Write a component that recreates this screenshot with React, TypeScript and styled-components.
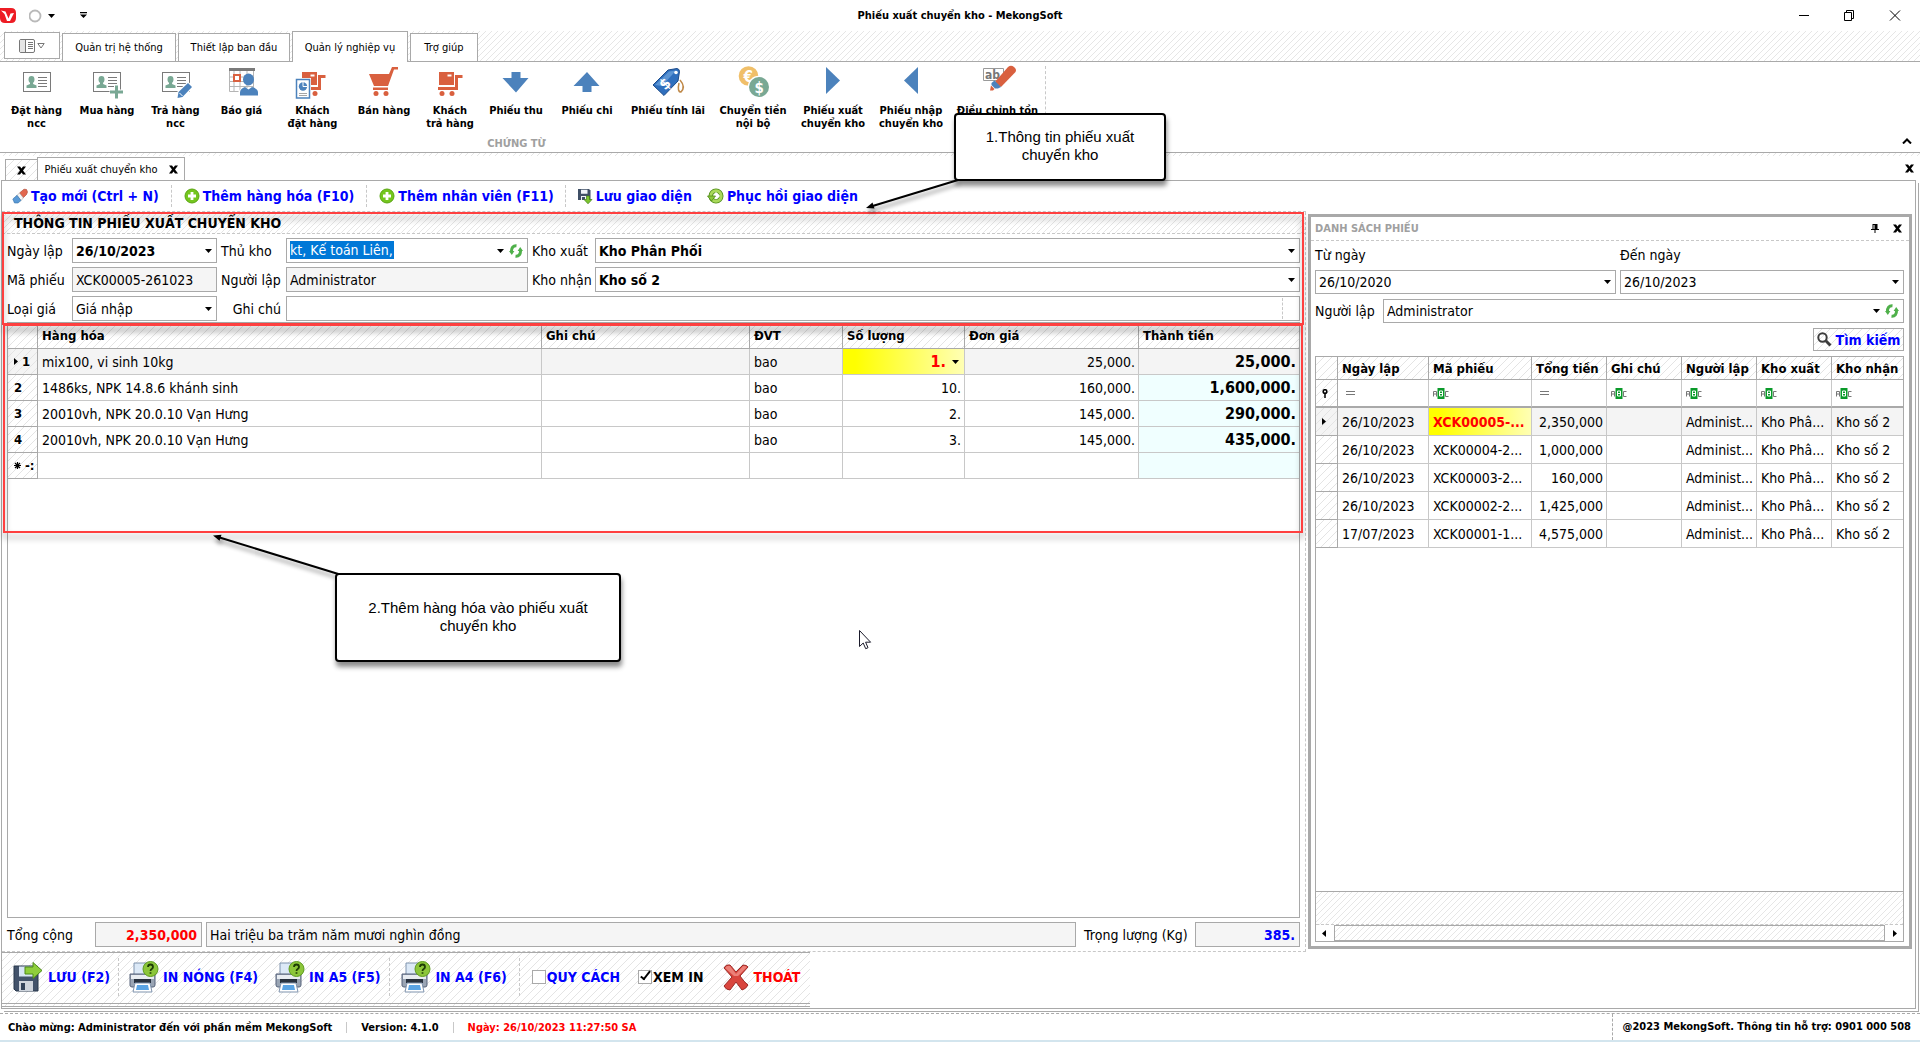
import React from 'react';
import styled, { createGlobalStyle, css } from 'styled-components';

const LINE = '#a9a9a9';
const SOFT = '#c8c8c8';
const UI = `'DejaVu Sans Condensed', 'DejaVu Sans', 'Noto Sans', sans-serif`;
const hatch = css`
  background-image: linear-gradient(-45deg, transparent 44%, #e6e6e6 46% 54%, transparent 56%);
  background-size: 6px 6px;
`;
const wideHatch = css`
  background-image: linear-gradient(-45deg, transparent 45%, #e4e4e4 47% 53%, transparent 55%);
  background-size: 8px 8px;
`;

const Global = createGlobalStyle`
  *, *::before, *::after { box-sizing: border-box; }
  body { margin: 0; background: #fff; color: #000; font-family: ${UI}; font-size: 14px; }
  button, input, select { font: inherit; color: inherit; margin: 0; padding: 0; border: 0; background: none; border-radius: 0; }
  input, select { outline: none; min-width: 0; }
  svg { display: block; flex: none; }
`;

const Shell = styled.div`
  position: relative;
  display: flex;
  flex-direction: column;
  min-height: 100vh;
  overflow: hidden;
`;

/* ---------- window title ---------- */
const TitleBar = styled.header`
  display: grid;
  grid-template-columns: 1fr auto 1fr;
  align-items: center;
  height: 31px;
`;
const QuickAccess = styled.div`
  display: flex;
  align-items: center;
  gap: 12px;
`;
const Title = styled.h1`
  margin: 0;
  font-size: 11px;
  font-weight: 700;
`;
const WindowButtons = styled.div`
  display: flex;
  justify-content: flex-end;
  gap: 26px;
  padding-right: 16px;
`;
const PlainButton = styled.button`
  display: flex;
  align-items: center;
  justify-content: center;
`;

/* ---------- ribbon ---------- */
const TabStrip = styled.nav`
  ${hatch}
  display: flex;
  align-items: flex-end;
  gap: 2px;
  height: 31px;
  padding-left: 4px;
  border-bottom: 1px solid ${LINE};
`;
const MenuButton = styled.button`
  display: flex;
  align-items: center;
  justify-content: center;
  gap: 2px;
  width: 56px;
  height: 27px;
  margin-bottom: 2px;
  border: 1px solid ${LINE};
  background: #fff;
`;
const RibbonTab = styled.button<{ $width: number; $active?: boolean }>`
  width: ${p => p.$width}px;
  height: ${p => (p.$active ? 31 : 28)}px;
  margin-bottom: ${p => (p.$active ? -1 : 0)}px;
  border: 1px solid ${LINE};
  border-bottom: 0;
  background: #fff;
  font-size: 11px;
`;
const Ribbon = styled.section`
  display: flex;
  justify-content: space-between;
  height: 91px;
  padding: 0 8px 0 2px;
  border-bottom: 1px solid ${LINE};
`;
const RibbonGroup = styled.div`
  display: flex;
  flex-direction: column;
  justify-content: space-between;
  margin: 4px 0 2px;
  border-right: 1px dashed ${SOFT};
`;
const RibbonItems = styled.div`
  display: flex;
`;
const RibbonButton = styled.button<{ $width: number }>`
  display: flex;
  flex-direction: column;
  align-items: center;
  gap: 4px;
  width: ${p => p.$width}px;
  font-size: 11px;
  font-weight: 700;
  line-height: 13px;
  white-space: pre-line;
`;
const RibbonCaption = styled.div`
  padding-right: 14px;
  color: #a0a0a0;
  font-size: 11px;
  font-weight: 700;
  line-height: 12px;
  text-align: center;
`;
const Collapse = styled(PlainButton)`
  align-self: flex-end;
  margin-bottom: 8px;
`;

/* ---------- document tabs ---------- */
const Seam = styled.div`
  ${hatch}
  height: 3px;
`;
const DocTabs = styled.nav`
  display: flex;
  align-items: flex-end;
  height: 24px;
  padding: 0 6px 0 5px;
`;
const DocTab = styled.div<{ $active?: boolean }>`
  ${p => !p.$active && wideHatch}
  display: flex;
  align-items: center;
  justify-content: center;
  gap: 11px;
  width: ${p => (p.$active ? 148 : 32)}px;
  height: ${p => (p.$active ? 24 : 21)}px;
  margin-bottom: ${p => (p.$active ? -1 : 0)}px;
  border: 1px solid ${LINE};
  border-width: 1px ${p => (p.$active ? 1 : 0)}px 0 1px;
  background-color: #fff;
  font-size: 11px;
`;
const DocClose = styled(PlainButton)`
  margin-left: auto;
  align-self: center;
`;

/* ---------- work frame ---------- */
const Frame = styled.main`
  display: flex;
  flex: 1;
  flex-direction: column;
  margin: 0 4px 4px 1px;
  border: 1px solid ${LINE};
  box-shadow: 2px 2px 0 #fff, 3px 3px 0 ${LINE};
`;
const Tools = styled.div`
  display: flex;
  align-items: center;
  height: 31px;
  padding-left: 10px;
  margin-right: 609px;
  border-bottom: 1px dashed ${SOFT};
`;
const Tool = styled.button`
  display: flex;
  align-items: center;
  gap: 3px;
  color: #0000ff;
  font-weight: 700;
  white-space: nowrap;
`;
const Divider = styled.span<{ $h: number; $gap?: number }>`
  height: ${p => p.$h}px;
  margin: 0 ${p => p.$gap || 12}px;
  border-left: 1px dashed ${SOFT};
`;
const ToolGap = styled.span`
  width: 15px;
`;
const Work = styled.div`
  display: grid;
  flex: 1;
  grid-template-columns: 1fr 606px;
  padding-right: 3px;
`;
const Left = styled.div`
  display: flex;
  flex-direction: column;
  min-width: 0;
  border-right: 1px dashed ${SOFT};
  border-bottom: 1px dashed ${SOFT};
`;
const Marked = styled.section<{ $grow?: boolean }>`
  position: relative;
  display: flex;
  flex-direction: column;
  flex: ${p => (p.$grow ? 1 : 'none')};
`;
const RedFrame = styled.div<{ $lower?: boolean }>`
  position: absolute;
  z-index: 2;
  inset: ${p => (p.$lower ? '2px 2px auto 1px' : '0 1px -3px 0')};
  height: ${p => (p.$lower ? '209px' : 'auto')};
  border: 2px solid #ff4040;
  filter: drop-shadow(0 5px 3px rgba(0, 0, 0, 0.35));
  pointer-events: none;
`;
const SectionTitle = styled.h2`
  ${hatch}
  height: 22px;
  margin: 0;
  padding-left: 12px;
  border-bottom: 1px dashed ${SOFT};
  font-size: 14px;
  line-height: 22px;
`;
const Form = styled.form`
  display: grid;
  grid-template-columns: 65px 145px 69px 242px 67px 1fr;
  gap: 4px 0;
  align-items: center;
  padding: 4px 5px 1px;
`;
const Label = styled.label<{ $right?: boolean }>`
  padding: 0 ${p => (p.$right ? 5 : 0)}px 0 ${p => (p.$right ? 0 : 4)}px;
  text-align: ${p => (p.$right ? 'right' : 'left')};
  white-space: nowrap;
`;
const FirstLabel = styled(Label)`
  padding-left: 0;
`;
const Box = styled.span<{ $h?: number; $span?: number; $off?: boolean; $bold?: boolean; $color?: string; $end?: boolean }>`
  display: flex;
  align-items: center;
  gap: 5px;
  min-width: 0;
  height: ${p => p.$h || 25}px;
  padding: 0 4px 0 3px;
  grid-column: span ${p => p.$span || 1};
  border: 1px solid ${LINE};
  background: ${p => (p.$off ? '#f5f5f5' : '#fff')};
  color: ${p => p.$color || '#000'};
  font-weight: ${p => (p.$bold ? 700 : 400)};
  input, select { flex: 1; width: 0; text-align: ${p => (p.$end ? 'right' : 'left')}; }
  select { appearance: none; }
`;
const PickedInput = styled.input`
  && { flex: none; width: 104px; height: 18px; margin-bottom: 2px; background: #0078d7; color: #fff; }
`;
const Push = styled.span`
  display: flex;
  align-items: center;
  gap: 5px;
  margin-left: auto;
`;
const Notch = styled.span`
  height: 21px;
  margin-right: 12px;
  border-left: 1px dashed ${SOFT};
`;

/* ---------- data grids ---------- */
const GridBox = styled.div<{ $left?: boolean }>`
  display: flex;
  flex: 1;
  flex-direction: column;
  margin: ${p => (p.$left ? '0 5px' : '0')};
  border: 1px solid ${LINE};
`;
const Table = styled.table<{ $row: number; $head: number }>`
  width: 100%;
  border-spacing: 0;
  table-layout: fixed;
  th, td {
    height: ${p => p.$row}px;
    padding: 0 0 0 4px;
    border: 0 solid ${SOFT};
    border-width: 0 1px 1px 0;
    font-weight: 400;
    text-align: left;
    white-space: nowrap;
    overflow: hidden;
  }
  th { ${wideHatch} border-color: ${LINE}; }
  thead th { height: ${p => p.$head}px; font-size: 13px; font-weight: 700; }
  th:last-child, td:last-child { border-right: 0; }
`;
const Row = styled.tr<{ $current?: boolean }>`
  background: ${p => (p.$current ? '#f4f4f4' : '#fff')};
`;
const Cell = styled.td<{ $num?: boolean; $total?: boolean; $tint?: boolean; $hot?: boolean }>`
  && { ${p => (p.$num ? 'padding-right: 3px; text-align: right;' : '')} }
  ${p => p.$total && '&& { font-size: 16px; font-weight: 700; }'}
  ${p => p.$tint && 'background: #f0ffff;'}
  ${p => p.$hot && '&& { background: linear-gradient(90deg, #ffff00 10%, #ffffb4); color: #ff0000; font-weight: 700; }'}
`;
const RowHead = styled.th`
  && { padding: 0 0 0 6px; font-weight: 700; font-size: 13px; }
`;
const MarkLine = styled.span`
  display: flex;
  align-items: center;
  gap: 4px;
`;
const Editor = styled.span`
  display: flex;
  align-items: center;
  gap: 6px;
  padding-right: 5px;
  font-size: 16px;
  input { flex: 1; width: 0; text-align: right; }
`;

const Totals = styled.div`
  display: flex;
  align-items: center;
  gap: 4px;
  padding: 4px 5px;
`;
const TotalLabel = styled.label<{ $w: number }>`
  width: ${p => p.$w}px;
  padding-left: ${p => (p.$w > 100 ? 4 : 0)}px;
  white-space: nowrap;
`;
const Sized = styled.span<{ $w?: number }>`
  flex: ${p => (p.$w ? 'none' : 1)};
  width: ${p => (p.$w ? p.$w + 'px' : 'auto')};
`;

/* ---------- voucher list panel ---------- */
const Panel = styled.aside`
  display: flex;
  flex-direction: column;
  margin: 2px 0 3px 2px;
  border: 3px solid ${LINE};
`;
const PanelHead = styled.header`
  display: flex;
  align-items: center;
  gap: 14px;
  height: 24px;
  padding: 0 7px 0 4px;
  border-bottom: 1px dashed ${SOFT};
  h2 { flex: 1; margin: 0; color: #a0a0a0; font-size: 11px; }
`;
const PanelBody = styled.div`
  display: flex;
  flex: 1;
  flex-direction: column;
  gap: 5px;
  padding: 0 5px 4px 4px;
`;
const Dates = styled.div`
  display: grid;
  grid-template-columns: 301px 1fr;
  column-gap: 4px;
  label { line-height: 29px; }
`;
const Author = styled.div`
  display: grid;
  grid-template-columns: 68px 1fr;
  align-items: center;
`;
const Search = styled.button`
  ${wideHatch}
  display: flex;
  align-items: center;
  align-self: flex-end;
  justify-content: center;
  gap: 4px;
  width: 91px;
  height: 23px;
  border: 1px solid ${LINE};
  color: #0000ff;
  font-weight: 700;
  white-space: nowrap;
`;
const GridFoot = styled.div`
  ${hatch}
  height: 34px;
  margin-top: auto;
  border-top: 1px solid ${LINE};
  border-bottom: 1px dashed ${SOFT};
`;
const Scroll = styled.div`
  display: flex;
  align-items: center;
  justify-content: space-between;
  gap: 8px;
  height: 16px;
  padding: 0 6px;
`;
const Thumb = styled.span`
  ${hatch}
  flex: 1;
  height: 16px;
  border: 1px solid ${LINE};
`;
const FilterRow = styled.tr`
  th, td { border-bottom: 2px solid ${LINE}; }
`;

/* ---------- bottom actions ---------- */
const Actions = styled.div`
  ${wideHatch}
  display: flex;
  align-items: center;
  align-self: flex-start;
  height: 55px;
  margin-bottom: 1px;
  padding: 0 10px 2px;
  border-top: 1px solid ${LINE};
  border-bottom: 4px double ${LINE};
`;
const Action = styled.button<{ $color?: string; $gap?: number }>`
  display: flex;
  align-items: center;
  gap: 4px;
  margin-right: ${p => p.$gap || 0}px;
  color: ${p => p.$color || '#0000ff'};
  font-weight: 700;
  white-space: nowrap;
`;
const Check = styled.label<{ $color: string }>`
  display: flex;
  align-items: center;
  gap: 1px;
  margin-right: 18px;
  color: ${p => p.$color};
  font-weight: 700;
  input {
    appearance: none;
    width: 14px;
    height: 14px;
    border: 1px solid ${LINE};
    background: #fff;
  }
  input:checked::after {
    content: '';
    display: block;
    width: 5px;
    height: 11px;
    margin: -2px 0 0 4px;
    border: solid #000;
    border-width: 0 2px 2px 0;
    transform: rotate(38deg);
  }
`;
const Status = styled.footer`
  display: flex;
  align-items: center;
  height: 29px;
  padding: 0 9px 0 8px;
  border-top: 1px dashed ${LINE};
  border-bottom: 2px solid #d3e5ee;
  font-size: 11px;
  font-weight: 700;
  white-space: nowrap;
`;
const StatusBar = styled.span`
  width: 1px;
  height: 11px;
  margin: 0 14px;
  background: ${SOFT};
`;
const Clock = styled.span`
  color: #ff0000;
`;
const Support = styled.span`
  margin-left: auto;
  padding-left: 10px;
  border-left: 1px dashed ${LINE};
  line-height: 26px;
`;

/* ---------- annotations floating over the window ---------- */
const Callout = styled.div<{ $x: number; $y: number; $w: number; $h: number }>`
  position: absolute;
  z-index: 4;
  left: ${p => p.$x}px;
  top: ${p => p.$y}px;
  display: flex;
  align-items: center;
  justify-content: center;
  width: ${p => p.$w}px;
  height: ${p => p.$h}px;
  padding: 0 26px 2px;
  border: 2px solid #000;
  border-radius: 4px;
  background: #fff;
  box-shadow: 1px 5px 5px rgba(0, 0, 0, 0.45);
  font-family: 'Liberation Sans', Arial, sans-serif;
  font-size: 15px;
  line-height: 18px;
  text-align: center;
`;
const Overlay = styled.svg<{ $x: number; $y: number }>`
  position: absolute;
  z-index: 3;
  left: ${p => p.$x}px;
  top: ${p => p.$y}px;
  overflow: visible;
  pointer-events: none;
`;
const Shaded = styled.g`
  filter: drop-shadow(1px 4px 2px rgba(0, 0, 0, 0.45));
`;

/* ---------- icons ---------- */
const Caret = () => (
  <svg width="7" height="4" viewBox="0 0 7 4"><path d="M0 0h7L3.500 4z" fill="#000" /></svg>
);
const Cross = () => (
  <svg width="9" height="9" viewBox="0 0 9 9"><path d="M0 .5h3l1.500 2 1.500-2h3L6 4.500l3 4H6l-1.500-2-1.500 2H0l3-4z" fill="#000" /></svg>
);
const Refresh = () => (
  <svg width="14" height="14" viewBox="0 0 14 14" fill="none" stroke="#4fb04a" strokeWidth="3">
    <path d="M7.500 1.800C4 1.500 2.300 4 2.500 7.500M6.500 12.200c3.500.3 5.200-2.200 5-5.700" />
    <path d="M0 7h5.400L2.800 11zM14 7H8.600l2.600-4z" fill="#4fb04a" stroke="none" />
  </svg>
);
const Plus = () => (
  <svg width="16" height="16" viewBox="0 0 16 16">
    <circle cx="8" cy="8" r="7" fill="#74c61e" stroke="#5aa512" />
    <path d="M8 4v8M4 8h8" stroke="#fff" strokeWidth="2.800" />
  </svg>
);
const Eraser = () => (
  <svg width="16" height="16" viewBox="0 0 16 16">
    <path d="M7.500 5L12 1.200l2.500.3 1 2.500-1 2.500-4 4z" fill="#e2674d" stroke="#a8412e" strokeWidth=".6" />
    <path d="M5 7.300L7.500 5l4 5-2.700 2.600z" fill="#f6f6f6" stroke="#999" strokeWidth=".5" />
    <path d="M.8 11L5 7.300l4 5.200-3 2.500H2.500z" fill="#5a9ad6" stroke="#336fa8" strokeWidth=".6" />
  </svg>
);
const SaveDown = () => (
  <svg width="16" height="16" viewBox="0 0 16 16">
    <path d="M1 1h11l1.500 1.500V12H1z" fill="#3f4f66" />
    <path d="M4 1.800h6.500v4H4zM4 8h7v4H4z" fill="#eef2f7" />
    <path d="M5 9h3v3H5z" fill="#3f4f66" />
    <path d="M9.500 8h3v3.500H15L11 15.800 7 11.500h2.500z" fill="#7cc52e" stroke="#3d7d12" strokeWidth=".7" />
  </svg>
);
const Restore = () => (
  <svg width="17" height="16" viewBox="0 0 17 16">
    <circle cx="9" cy="8" r="5.200" fill="none" stroke="#4e8a18" strokeWidth="4.600" />
    <circle cx="9" cy="8" r="5.200" fill="none" stroke="#a9d95a" strokeWidth="3" />
    <path d="M.5 8h8L4.500 13z" fill="#8cc83c" stroke="#4e8a18" strokeWidth=".8" />
    <path d="M8.500 4.500L12 8l-3.500 3" fill="none" stroke="#fff" strokeWidth="1.500" />
  </svg>
);
const Magnifier = () => (
  <svg width="15" height="15" viewBox="0 0 15 15" fill="none" stroke="#3c3c3c">
    <circle cx="5.500" cy="5.500" r="4.200" strokeWidth="2" />
    <path d="M8.800 8.800l4.700 4.700" strokeWidth="3" />
  </svg>
);
const AbcIcon = () => (
  <svg width="16" height="11" viewBox="0 0 16 11" fill="none">
    <path d="M.5 8.500v-5h3v5M.5 6h3" stroke="#777" />
    <path d="M4.500 0h7v11h-7z" fill="#0a9a2a" />
    <path d="M6.500 3h3v5h-3zM6.500 5.500h3" stroke="#fff" />
    <path d="M15.500 3.500h-3v5h3" stroke="#777" />
  </svg>
);
const EqIcon = () => (
  <svg width="14" height="5" viewBox="0 0 14 5"><path d="M4 .5h9M4 3.500h9" stroke="#777" /></svg>
);
const RightMark = () => (
  <svg width="4" height="7" viewBox="0 0 4 7"><path d="M0 0l4 3.500L0 7z" /></svg>
);
const LeftMark = () => (
  <svg width="4" height="7" viewBox="0 0 4 7"><path d="M4 0L0 3.500 4 7z" /></svg>
);
const Logo = () => (
  <svg width="17" height="17" viewBox="0 0 17 17">
    <path d="M0 1h11q5 0 5 5v5q0 5-5 5H5q-5 0-5-5z" fill="#ed1c24" />
    <path d="M1 3.500l4.500 1 3 7 2-5 3.500-.5-4 8H7L4.500 7z" fill="#fff" />
  </svg>
);
const MenuIcon = () => (
  <svg width="16" height="14" viewBox="0 0 16 14" fill="none" stroke="#777">
    <rect x=".5" y=".5" width="15" height="13" rx="1.500" />
    <path d="M6.500 1v12" />
    <path d="M9 3.500h5M9 5.500h5M9 7.500h5M9 9.500h5" />
    <path d="M1 1h5v12H1z" fill="#e6e6e6" stroke="none" />
  </svg>
);
const Card = () => (
  <g>
    <rect x="2.500" y="5.500" width="27" height="19" fill="#fff" stroke="#7a7a7a" />
    <path d="M17 10.500h9M17 13.500h9M17 16.500h9M17 19.500h9" stroke="#7a7a7a" />
    <path d="M10.500 9a3 3.400 0 0 1 3 3.400c0 1.500-.6 2.600-1.400 3.300v1.300l3.400 1.600V21h-10v-2.400L9 17v-1.300c-.9-.7-1.500-1.800-1.500-3.300a3 3.400 0 0 1 3-3.400z" fill="#79a894" />
  </g>
);
const Cart = ({ box }: { box?: boolean }) => (
  <g fill="#d9603f">
    {box ? (
      <>
        <path d="M5 5h15v13H5z" />
        <path d="M13.500 7.500h4v2h-4z" fill="#fff" />
        <path d="M22.500 23V9.500h6" fill="none" stroke="#d9603f" strokeWidth="3" />
        <path d="M4 20h20v3H4z" />
      </>
    ) : (
      <>
        <path d="M1 7h20l3-7h6v2.500h-4L20 19H6z" />
        <path d="M5 20.500h15V23H5z" />
      </>
    )}
    <circle cx="8" cy="26.500" r="2.500" />
    <circle cx="18" cy="26.500" r="2.500" />
  </g>
);
const blue = '#4c82bc';
const ribbonArt: Record<string, React.ReactNode> = {
  card: <Card />,
  cardPlus: <><Card /><path d="M25.500 17.500v14M18.500 25h14" stroke="#fff" strokeWidth="5" /><path d="M25.500 18.500v13M19 25h13" stroke="#79a894" strokeWidth="3" /></>,
  cardPen: <><Card /><path d="M16 32l1-7L28 14.500l6 5.500-11 11z" fill="#fff" /><path d="M17.500 31l1-6L28 16l4 4-9.500 10z" fill={blue} /><path d="M19.500 26l3 3" stroke="#fff" /></>,
  quote: <>
    <path d="M3.500 4v20.500h24V4M3.500 10h24M3.500 14.500h24M3.500 19.500h24M8 4v20M14 4v20M21 4v20" fill="none" stroke="#b5b5b5" />
    <path d="M3 1h26v3H3z" fill="#7a7a7a" />
    <path d="M8 8h6v6H8z" fill="#fff" stroke="#d9603f" strokeWidth="2" />
    <path d="M12 31v-4q0-5 6-6h9q5 1 6 6v4z" fill="#fff" />
    <ellipse cx="22.500" cy="12.500" rx="5.500" ry="6" fill={blue} />
    <path d="M14 28.500v-3q0-4 5-5.500l3.500 2.500L26 20q6 1.500 6 5.500v3z" fill={blue} />
  </>,
  order: <><Cart box /><path d="M-2 11h16v21H-2z" fill="#fff" /><path d="M-.5 12.500h13v18.500h-13z" fill="#fff" stroke={blue} strokeWidth="1.500" /><circle cx="6" cy="19.500" r="4.200" fill={blue} /><path d="M6 15v4.500h4.500" stroke="#fff" fill="none" /><path d="M2 26.500h8M2 28.500h8" stroke="#a5a5a5" /></>,
  cart: <Cart />,
  cartBox: <Cart box />,
  down: <path d="M11.500 5h9v6h8L16 25.500 2.500 11h9z" fill={blue} />,
  up: <path d="M11.500 25h9v-6h8L16 5 2.500 19h9z" fill={blue} />,
  tag: <>
    <path d="M28 13q6 7 1 12-4 0-2-9" fill="none" stroke="#c08a4a" strokeWidth="1.500" />
    <path d="M1 18L16 3l9-1.500q2.500.5 2.500 3L26 14 12 28.500z" fill="#2f6fbd" stroke="#1c4b8a" />
    <path d="M3 18L17 4.500l7-1L10 19z" fill="#5c95d4" />
    <text x="8" y="21" fill="#fff" fontSize="15" fontWeight="700" transform="rotate(-45 14 16)">$</text>
    <circle cx="24" cy="5.500" r="1.800" fill="#fff" />
  </>,
  coins: <>
    <circle cx="11.500" cy="9" r="9.800" fill="#f0bf69" />
    <text x="6.500" y="14.500" fill="#fff" fontSize="15" fontWeight="700">€</text>
    <circle cx="22" cy="20" r="11.200" fill="#fff" />
    <circle cx="22" cy="20" r="10" fill="#79a894" />
    <text x="17.500" y="25.500" fill="#fff" fontSize="15" fontWeight="700">$</text>
  </>,
  right: <path d="M9 0l14 13.500L9 27z" fill={blue} />,
  left: <path d="M23 0L9 13.500 23 27z" fill={blue} />,
  marker: <>
    <path d="M1.500 1.500h20v12h-20z" fill="#fff" stroke="#9a9a9a" />
    <text x="3" y="12" fill="#777" fontSize="12">ab</text>
    <path d="M12 16L26 0q3-2.500 6 0t1.500 5L19 20z" fill="#d9603f" />
    <path d="M12.500 13.500l6.500 6.500-3 1.500h-3l-3.500-3.500v-2z" fill={blue} />
    <path d="M9 18.500l3.500 3.500-1.500 1.500H8z" fill="#d9603f" />
  </>,
};
const RibbonIcon = ({ name }: { name: string }) => (
  <svg width="32" height="34" viewBox="0 -1 32 34" overflow="visible">{ribbonArt[name]}</svg>
);
const Floppy = () => (
  <svg width="32" height="32" viewBox="0 0 32 32">
    <path d="M2 5h22l2 2v23H4l-2-2z" fill="#43536b" stroke="#29384d" />
    <path d="M7 5.500h14v10H7z" fill="#d8e6f5" />
    <path d="M7 20h14v10H7z" fill="#cfd5dd" />
    <path d="M9 22h4v7H9z" fill="#33435a" />
    <path d="M13 6h8V1.500l9 8-9 8V13h-8z" fill="#8fce3c" stroke="#4c8a17" />
  </svg>
);
const Printer = () => (
  <svg width="32" height="32" viewBox="0 0 32 32">
    <path d="M7 2h14v13H7z" fill="#dce9f7" stroke="#7f93ad" />
    <path d="M3 13h25v11q0 2-2 2H5q-2 0-2-2z" fill="#9aa5b4" stroke="#56637a" />
    <path d="M4 14h23v4H4z" fill="#e9edf2" />
    <path d="M7 18h17v4H7z" fill="#28323f" />
    <path d="M8 22h15l2 9H6z" fill="#fff" stroke="#7f93ad" />
    <path d="M10 24h11l1 5H9z" fill="#5aa4e4" />
    <circle cx="23.500" cy="8" r="7.500" fill="#8cc63a" stroke="#5d9a1e" />
    <path d="M21 6q0-2.500 2.500-2.500T26 6q0 1-1.300 2-1.200.8-1.200 2M23.500 11.300v1.500" fill="none" stroke="#1e3d05" strokeWidth="1.800" />
  </svg>
);
const Exit = () => (
  <svg width="28" height="28" viewBox="0 0 28 28">
    <path d="M2 5q2-4 6-3l6 7 7-7q4 0 5 2l-8 9q4 6 8 9-2 4-6 5l-6-8-6 8q-4 0-6-4l8-9z" fill="#d9453d" stroke="#9c2a26" />
    <path d="M3 5q2-3 5-2l6 8 7-8q3 0 4 1l-9 9H12z" fill="#ec8078" />
  </svg>
);

const ribbonItems: [string, string, number][] = [
  ['card', 'Đặt hàng\nncc', 69], ['cardPlus', 'Mua hàng', 72], ['cardPen', 'Trả hàng\nncc', 65],
  ['quote', 'Báo giá', 67], ['order', 'Khách\nđặt hàng', 75], ['cart', 'Bán hàng', 68],
  ['cartBox', 'Khách\ntrả hàng', 64], ['down', 'Phiếu thu', 68], ['up', 'Phiếu chi', 74],
  ['tag', 'Phiếu tính lãi', 88], ['coins', 'Chuyển tiền\nnội bộ', 82],
  ['right', 'Phiếu xuất\nchuyển kho', 78], ['left', 'Phiếu nhập\nchuyển kho', 78], ['marker', 'Điều chỉnh tồn', 95],
];
const goods = [
  ['mix100, vi sinh 10kg', 'bao', '1.', '25,000.', '25,000.'],
  ['1486ks, NPK 14.8.6 khánh sinh', 'bao', '10.', '160,000.', '1,600,000.'],
  ['20010vh, NPK 20.0.10 Vạn Hưng', 'bao', '2.', '145,000.', '290,000.'],
  ['20010vh, NPK 20.0.10 Vạn Hưng', 'bao', '3.', '145,000.', '435,000.'],
];
const vouchers = [
  ['26/10/2023', 'XCK00005-...', '2,350,000'],
  ['26/10/2023', 'XCK00004-2...', '1,000,000'],
  ['26/10/2023', 'XCK00003-2...', '160,000'],
  ['26/10/2023', 'XCK00002-2...', '1,425,000'],
  ['17/07/2023', 'XCK00001-1...', '4,575,000'],
];

export default function App() {
  return (
    <Shell>
      <Global />
      <TitleBar>
        <QuickAccess>
          <Logo />
          <PlainButton aria-label="Giao diện">
            <svg width="26" height="14" viewBox="0 0 26 14">
              <circle cx="6" cy="7" r="5.500" fill="none" stroke="#b9b9b9" strokeWidth="1.800" />
              <path d="M19 5h7l-3.500 4z" />
            </svg>
          </PlainButton>
          <PlainButton aria-label="Tùy chỉnh">
            <svg width="32" height="7" viewBox="0 0 32 7"><path d="M13 0h7v1.200h-7zM13 2.500h7L16.500 6z" /></svg>
          </PlainButton>
        </QuickAccess>
        <Title>Phiếu xuất chuyển kho - MekongSoft</Title>
        <WindowButtons>
          <PlainButton aria-label="Thu nhỏ"><svg width="19" height="11" viewBox="0 0 19 11"><path d="M4 5.500h10" stroke="#000" /></svg></PlainButton>
          <PlainButton aria-label="Khôi phục"><svg width="19" height="11" viewBox="0 0 19 11" fill="none" stroke="#000"><path d="M4.500 2.500h7v8h-7zM6.500 2.500v-2h7v8h-2" /></svg></PlainButton>
          <PlainButton aria-label="Đóng"><svg width="19" height="11" viewBox="0 0 19 11"><path d="M5 .5l10 10M15 .5l-10 10" stroke="#000" /></svg></PlainButton>
        </WindowButtons>
      </TitleBar>

      <TabStrip>
        <MenuButton aria-label="Menu">
          <MenuIcon />
          <svg width="8" height="6" viewBox="0 0 8 6"><path d="M.8.500h6.400L4 5z" fill="none" stroke="#777" /></svg>
        </MenuButton>
        <RibbonTab $width={114}>Quản trị hệ thống</RibbonTab>
        <RibbonTab $width={112}>Thiết lập ban đầu</RibbonTab>
        <RibbonTab $width={116} $active>Quản lý nghiệp vụ</RibbonTab>
        <RibbonTab $width={68}>Trợ giúp</RibbonTab>
      </TabStrip>

      <Ribbon>
        <RibbonGroup>
          <RibbonItems>
            {ribbonItems.map(([icon, text, width]) => (
              <RibbonButton key={text} $width={width}><RibbonIcon name={icon} />{text}</RibbonButton>
            ))}
          </RibbonItems>
          <RibbonCaption>CHỨNG TỪ</RibbonCaption>
        </RibbonGroup>
        <Collapse aria-label="Thu gọn">
          <svg width="10" height="6" viewBox="0 0 10 6"><path d="M1 5.500L5 1.500l4 4" fill="none" stroke="#000" strokeWidth="2" /></svg>
        </Collapse>
      </Ribbon>
      <Seam />

      <DocTabs>
        <DocTab><PlainButton aria-label="Đóng"><Cross /></PlainButton></DocTab>
        <DocTab $active>Phiếu xuất chuyển kho<PlainButton aria-label="Đóng phiếu"><Cross /></PlainButton></DocTab>
        <DocClose aria-label="Đóng tất cả"><Cross /></DocClose>
      </DocTabs>

      <Frame>
        <Tools>
          <Tool><Eraser />Tạo mới (Ctrl + N)</Tool>
          <Divider $h={22} />
          <Tool><Plus />Thêm hàng hóa (F10)</Tool>
          <Divider $h={22} />
          <Tool><Plus />Thêm nhân viên (F11)</Tool>
          <Divider $h={22} $gap={11} />
          <Tool><SaveDown />Lưu giao diện</Tool>
          <ToolGap />
          <Tool><Restore />Phục hồi giao diện</Tool>
        </Tools>

        <Work>
          <Left>
            <Marked>
              <SectionTitle>THÔNG TIN PHIẾU XUẤT CHUYỂN KHO</SectionTitle>
              <Form>
                <FirstLabel htmlFor="date">Ngày lập</FirstLabel>
                <Box $bold><input id="date" defaultValue="26/10/2023" /><Caret /></Box>
                <Label htmlFor="keeper">Thủ kho</Label>
                <Box><PickedInput id="keeper" defaultValue="kt, Kế toán Liên," /><Push><Caret /><Refresh /></Push></Box>
                <Label htmlFor="from">Kho xuất</Label>
                <Box $bold><select id="from"><option>Kho Phân Phối</option></select><Caret /></Box>

                <FirstLabel htmlFor="code">Mã phiếu</FirstLabel>
                <Box $off><input id="code" readOnly defaultValue="XCK00005-261023" /></Box>
                <Label htmlFor="author">Người lập</Label>
                <Box $off><input id="author" readOnly defaultValue="Administrator" /></Box>
                <Label htmlFor="to">Kho nhận</Label>
                <Box $bold><select id="to"><option>Kho số 2</option></select><Caret /></Box>

                <FirstLabel htmlFor="price">Loại giá</FirstLabel>
                <Box><select id="price"><option>Giá nhập</option></select><Caret /></Box>
                <Label $right htmlFor="note">Ghi chú</Label>
                <Box $span={3}><input id="note" /><Notch /></Box>
              </Form>
              <RedFrame />
            </Marked>

            <Marked $grow>
              <GridBox $left>
                <Table $row={26} $head={26}>
                  <colgroup>
                    <col style={{ width: 30 }} /><col /><col style={{ width: 208 }} /><col style={{ width: 93 }} />
                    <col style={{ width: 122 }} /><col style={{ width: 174 }} /><col style={{ width: 160 }} />
                  </colgroup>
                  <thead>
                    <tr><th /><th>Hàng hóa</th><th>Ghi chú</th><th>ĐVT</th><th>Số lượng</th><th>Đơn giá</th><th>Thành tiền</th></tr>
                  </thead>
                  <tbody>
                    {goods.map(([name, unit, qty, price, total], i) => (
                      <Row key={i} $current={i === 0}>
                        <RowHead scope="row"><MarkLine>{i === 0 && <RightMark />}{i + 1}</MarkLine></RowHead>
                        <Cell>{name}</Cell>
                        <Cell />
                        <Cell>{unit}</Cell>
                        {i === 0
                          ? <Cell $hot><Editor><input aria-label="Số lượng" defaultValue={qty} /><Caret /></Editor></Cell>
                          : <Cell $num>{qty}</Cell>}
                        <Cell $num>{price}</Cell>
                        <Cell $num $total $tint={i > 0}>{total}</Cell>
                      </Row>
                    ))}
                    <Row>
                      <RowHead scope="row">
                        <MarkLine>
                          <svg width="7" height="7" viewBox="0 0 7 7"><path d="M3.500 0v7M0 3.500h7M1 1l5 5M6 1L1 6" stroke="#000" strokeWidth="1.200" /></svg>
                          -:
                        </MarkLine>
                      </RowHead>
                      <Cell /><Cell /><Cell /><Cell /><Cell /><Cell $tint />
                    </Row>
                  </tbody>
                </Table>
              </GridBox>
              <RedFrame $lower />
            </Marked>

            <Totals>
              <TotalLabel $w={84} htmlFor="sum">Tổng cộng</TotalLabel>
              <Sized $w={107}><Box $off $bold $end $color="#ff0000"><input id="sum" readOnly defaultValue="2,350,000" /></Box></Sized>
              <Sized><Box $off><input aria-label="Bằng chữ" readOnly defaultValue="Hai triệu ba trăm năm mươi nghìn đồng" /></Box></Sized>
              <TotalLabel $w={111} htmlFor="weight">Trọng lượng (Kg)</TotalLabel>
              <Sized $w={105}><Box $off $bold $end $color="#0000ff"><input id="weight" readOnly defaultValue="385." /></Box></Sized>
            </Totals>
          </Left>

          <Panel>
            <PanelHead>
              <h2>DANH SÁCH PHIẾU</h2>
              <PlainButton aria-label="Ghim"><svg width="8" height="9" viewBox="0 0 8 9"><path d="M1.500 0h5v5H8v1H4.500v3h-1V6H0V5h1.500z" /><path d="M3 1v4" stroke="#fff" /></svg></PlainButton>
              <PlainButton aria-label="Đóng danh sách"><Cross /></PlainButton>
            </PanelHead>
            <PanelBody>
              <Dates>
                <label htmlFor="since">Từ ngày</label>
                <label htmlFor="until">Đến ngày</label>
                <Box $h={24}><input id="since" defaultValue="26/10/2020" /><Caret /></Box>
                <Box $h={24}><input id="until" defaultValue="26/10/2023" /><Caret /></Box>
              </Dates>
              <Author>
                <label htmlFor="by">Người lập</label>
                <Box $h={24}><select id="by"><option>Administrator</option></select><Caret /><Refresh /></Box>
              </Author>
              <Search><Magnifier />Tìm kiếm</Search>
              <GridBox>
                <Table $row={28} $head={23}>
                  <colgroup>
                    <col style={{ width: 22 }} /><col style={{ width: 91 }} /><col style={{ width: 103 }} /><col style={{ width: 75 }} />
                    <col style={{ width: 75 }} /><col style={{ width: 75 }} /><col style={{ width: 75 }} /><col />
                  </colgroup>
                  <thead>
                    <tr><th /><th>Ngày lập</th><th>Mã phiếu</th><th>Tổng tiền</th><th>Ghi chú</th><th>Người lập</th><th>Kho xuất</th><th>Kho nhận</th></tr>
                  </thead>
                  <tbody>
                    <FilterRow>
                      <RowHead><svg width="6" height="9" viewBox="0 0 6 9"><circle cx="3" cy="2.500" r="1.800" fill="none" stroke="#000" strokeWidth="1.600" /><path d="M3 4v5" stroke="#000" strokeWidth="1.500" /></svg></RowHead>
                      <Cell><EqIcon /></Cell><Cell><AbcIcon /></Cell><Cell><EqIcon /></Cell>
                      <Cell><AbcIcon /></Cell><Cell><AbcIcon /></Cell><Cell><AbcIcon /></Cell><Cell><AbcIcon /></Cell>
                    </FilterRow>
                    {vouchers.map(([date, code, sum], i) => (
                      <Row key={code} $current={i === 0}>
                        <RowHead scope="row">{i === 0 && <RightMark />}</RowHead>
                        <Cell>{date}</Cell>
                        <Cell $hot={i === 0}>{code}</Cell>
                        <Cell $num>{sum}</Cell>
                        <Cell />
                        <Cell>Administ...</Cell>
                        <Cell>Kho Phâ...</Cell>
                        <Cell>Kho số 2</Cell>
                      </Row>
                    ))}
                  </tbody>
                </Table>
                <GridFoot />
                <Scroll><LeftMark /><Thumb /><RightMark /></Scroll>
              </GridBox>
            </PanelBody>
          </Panel>
        </Work>

        <Actions>
          <Action><Floppy />LƯU (F2)</Action>
          <Divider $h={38} $gap={8} />
          <Action $gap={15}><Printer />IN NÓNG (F4)</Action>
          <Action><Printer />IN A5 (F5)</Action>
          <Divider $h={38} $gap={9} />
          <Action><Printer />IN A4 (F6)</Action>
          <Divider $h={38} $gap={12} />
          <Check $color="#0000ff"><input type="checkbox" />QUY CÁCH</Check>
          <Check $color="#000"><input type="checkbox" defaultChecked />XEM IN</Check>
          <Action $color="#ff0000"><Exit />THOÁT</Action>
        </Actions>
      </Frame>

      <Status>
        <span>Chào mừng: Administrator đến với phần mềm MekongSoft</span>
        <StatusBar />
        <span>Version: 4.1.0</span>
        <StatusBar />
        <Clock>Ngày: 26/10/2023 11:27:50 SA</Clock>
        <Support>@2023 MekongSoft. Thông tin hỗ trợ: 0901 000 508</Support>
      </Status>

      <Overlay $x={866} $y={180} width="92" height="28">
        <Shaded>
          <path d="M92 0L5 26.500" stroke="#000" strokeWidth="2" />
          <path d="M0 28l6.500-5.500 2 6z" />
        </Shaded>
      </Overlay>
      <Overlay $x={213} $y={535} width="127" height="40">
        <Shaded>
          <path d="M127 39.500L5 2" stroke="#000" strokeWidth="2" />
          <path d="M0 .500l8.500-.8-2 6z" />
        </Shaded>
      </Overlay>
      <Callout $x={954} $y={113} $w={212} $h={68}>1.Thông tin phiếu xuất chuyển kho</Callout>
      <Callout $x={335} $y={573} $w={286} $h={89}>2.Thêm hàng hóa vào phiếu xuất chuyển kho</Callout>
      <Overlay $x={859} $y={630} width="12" height="19">
        <path d="M.5.500v16l3.700-3.500 2.500 5.700 2.300-1-2.400-5.500h5z" fill="#fff" stroke="#1a1a2a" />
      </Overlay>
    </Shell>
  );
}
